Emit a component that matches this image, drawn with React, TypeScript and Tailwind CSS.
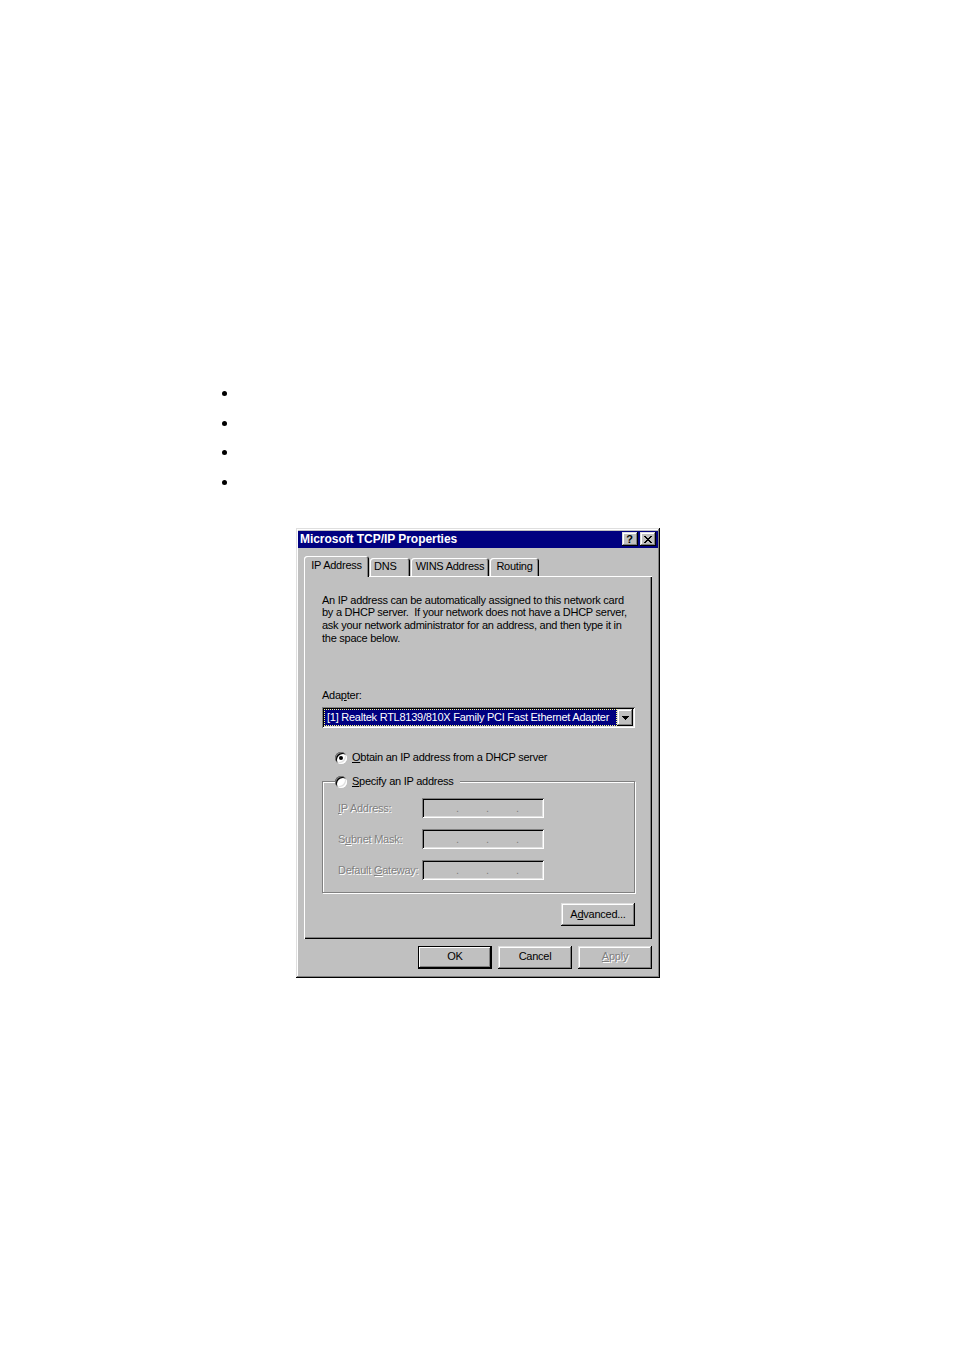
const raised =
  "shadow-[inset_-1px_-1px_0_#000,inset_1px_1px_0_#dfdfdf,inset_-2px_-2px_0_#808080,inset_2px_2px_0_#fff]";
const sunken =
  "shadow-[inset_1px_1px_0_#808080,inset_-1px_-1px_0_#fff,inset_2px_2px_0_#000,inset_-2px_-2px_0_#dfdfdf]";
const uiFont =
  "font-['Liberation_Sans',Arial,sans-serif] text-[11px] leading-[13px] tracking-[-0.25px] whitespace-nowrap";

function Radio({ checked }: { checked?: boolean }) {
  return (
    <span className={`flex h-[12px] w-[12px] shrink-0 items-center justify-center rounded-full bg-white ${sunken}`}>
      {checked ? <span className="h-[4px] w-[4px] rounded-full bg-black" /> : null}
    </span>
  );
}

function Tab({ label, width, active, alignStart }: { label: string; width: string; active?: boolean; alignStart?: boolean }) {
  return (
    <div
      className={`flex items-center rounded-t-[3px] bg-[#c0c0c0] shadow-[inset_1px_1px_0_#fff,inset_-1px_0_0_#000,inset_-2px_0_0_#808080] ${width} ${
        alignStart ? "justify-start pl-[4px]" : "justify-center"
      } ${active ? "relative z-10 -mb-[1px] h-[21px] pb-[1px]" : "h-[18px]"}`}
    >
      {label}
    </div>
  );
}

function Button({ children, width, isDefault, disabled }: { children: React.ReactNode; width: string; isDefault?: boolean; disabled?: boolean }) {
  return (
    <button
      type="button"
      className={`flex h-[23px] items-center justify-center bg-[#c0c0c0] pb-[1px] ${width} ${
        isDefault
          ? "shadow-[inset_0_0_0_1px_#000,inset_-2px_-2px_0_#000,inset_2px_2px_0_#fff,inset_-3px_-3px_0_#808080]"
          : raised
      } ${disabled ? "text-[#808080] [text-shadow:1px_1px_0_#fff]" : "text-black"}`}
    >
      {children}
    </button>
  );
}

function AddressField({ label }: { label: React.ReactNode }) {
  return (
    <div className="flex h-[20px] items-center">
      <span className="w-[84px] text-[#808080] [text-shadow:1px_1px_0_#fff]">{label}</span>
      <div className={`flex h-[20px] w-[122px] items-end bg-[#c0c0c0] pb-[3px] pl-[34px] ${sunken}`}>
        <span className="w-[30px] text-[#808080]">.</span>
        <span className="w-[30px] text-[#808080]">.</span>
        <span className="text-[#808080]">.</span>
      </div>
    </div>
  );
}

export default function App() {
  return (
    <div className={`h-[1350px] w-[954px] bg-white ${uiFont}`}>
      <ul className="flex flex-col gap-[24.5px] pl-[222px] pt-[391px]">
        <li className="h-[5px] w-[5px] rounded-full bg-black" />
        <li className="h-[5px] w-[5px] rounded-full bg-black" />
        <li className="h-[5px] w-[5px] rounded-full bg-black" />
        <li className="h-[5px] w-[5px] rounded-full bg-black" />
      </ul>

      <div className={`ml-[296px] mt-[43px] flex h-[450px] w-[364px] flex-col bg-[#c0c0c0] px-[2px] pt-[3px] ${raised}`}>
        <div className="flex h-[17px] items-center justify-between bg-[#000080] pl-[2px] pr-[2px]">
          <span className="text-[12px] font-bold tracking-[-0.05px] text-white">Microsoft TCP/IP Properties</span>
          <div className="flex gap-[2px]">
            <span className={`flex h-[14px] w-[16px] items-center justify-center bg-[#c0c0c0] pr-[1px] text-[11px] font-bold leading-[11px] ${raised}`}>
              ?
            </span>
            <span className={`flex h-[14px] w-[16px] items-center justify-center bg-[#c0c0c0] ${raised}`}>
              <svg width="8" height="7" viewBox="0 0 8 7" shapeRendering="crispEdges">
                <path d="M0 0h2v1h-2zM6 0h2v1h-2zM1 1h2v1h-2zM5 1h2v1h-2zM2 2h4v1h-4zM3 3h2v1h-2zM2 4h4v1h-4zM1 5h2v1h-2zM5 5h2v1h-2zM0 6h2v1h-2zM6 6h2v1h-2z" fill="#000" />
              </svg>
            </span>
          </div>
        </div>

        <div className="flex flex-col px-[6px] pt-[8px]">
          <div className="flex items-end gap-[1px]">
            <Tab label="IP Address" width="w-[65px]" active />
            <Tab label="DNS" width="w-[40px]" alignStart />
            <Tab label="WINS Address" width="w-[78px]" />
            <Tab label="Routing" width="w-[49px]" />
          </div>

          <div className="flex h-[363px] w-[348px] flex-col pl-[18px] pr-[17px] pt-[18px] shadow-[inset_1px_1px_0_#fff,inset_-1px_-1px_0_#000,inset_-2px_-2px_0_#808080]">
            <p className="leading-[12.7px]">
              An IP address can be automatically assigned to this network card
              <br />
              by a DHCP server.&nbsp; If your network does not have a DHCP server,
              <br />
              ask your network administrator for an address, and then type it in
              <br />
              the space below.
            </p>

            <p className="mt-[45px]">
              Ada<span className="underline">p</span>ter:
            </p>

            <div className={`mt-[5px] flex h-[21px] items-center bg-white pl-[2px] pr-[2px] ${sunken}`}>
              <div className="flex h-[17px] flex-1 items-center overflow-hidden border border-dotted border-[#ffff80] bg-[#000080] pl-[2px] text-white">
                [1] Realtek RTL8139/810X Family PCI Fast Ethernet Adapter
              </div>
              <span className={`flex h-[17px] w-[16px] items-center justify-center bg-[#c0c0c0] ${raised}`}>
                <svg width="7" height="4" viewBox="0 0 7 4" shapeRendering="crispEdges">
                  <path d="M0 0h7v1h-7zM1 1h5v1h-5zM2 2h3v1h-3zM3 3h1v1h-1z" fill="#000" />
                </svg>
              </span>
            </div>

            <div className="ml-[13px] mt-[23px] flex items-center gap-[5px]">
              <Radio checked />
              <span>
                <span className="underline">O</span>btain an IP address from a DHCP server
              </span>
            </div>

            <fieldset className="mt-[11px] w-[313px] border border-[#808080] px-[15px] pb-[12px] pt-[10px] shadow-[1px_1px_0_#fff,inset_1px_1px_0_#fff]">
              <legend className="ml-[-3px] bg-[#c0c0c0] pr-[6px]">
                <span className="flex items-center gap-[5px]">
                  <Radio />
                  <span>
                    <span className="underline">S</span>pecify an IP address
                  </span>
                </span>
              </legend>
              <div className="flex flex-col gap-[11px]">
                <AddressField
                  label={
                    <>
                      <span className="underline">I</span>P Address:
                    </>
                  }
                />
                <AddressField
                  label={
                    <>
                      S<span className="underline">u</span>bnet Mask:
                    </>
                  }
                />
                <AddressField
                  label={
                    <>
                      Default <span className="underline">G</span>ateway:
                    </>
                  }
                />
              </div>
            </fieldset>

            <div className="mt-[10px] flex justify-end">
              <Button width="w-[74px]">
                <span>
                  A<span className="underline">d</span>vanced...
                </span>
              </Button>
            </div>
          </div>

          <div className="mt-[7px] flex justify-end gap-[6px]">
            <Button width="w-[74px]" isDefault>
              OK
            </Button>
            <Button width="w-[74px]">Cancel</Button>
            <Button width="w-[74px]" disabled>
              <span>
                <span className="underline">A</span>pply
              </span>
            </Button>
          </div>
        </div>
      </div>
    </div>
  );
}
